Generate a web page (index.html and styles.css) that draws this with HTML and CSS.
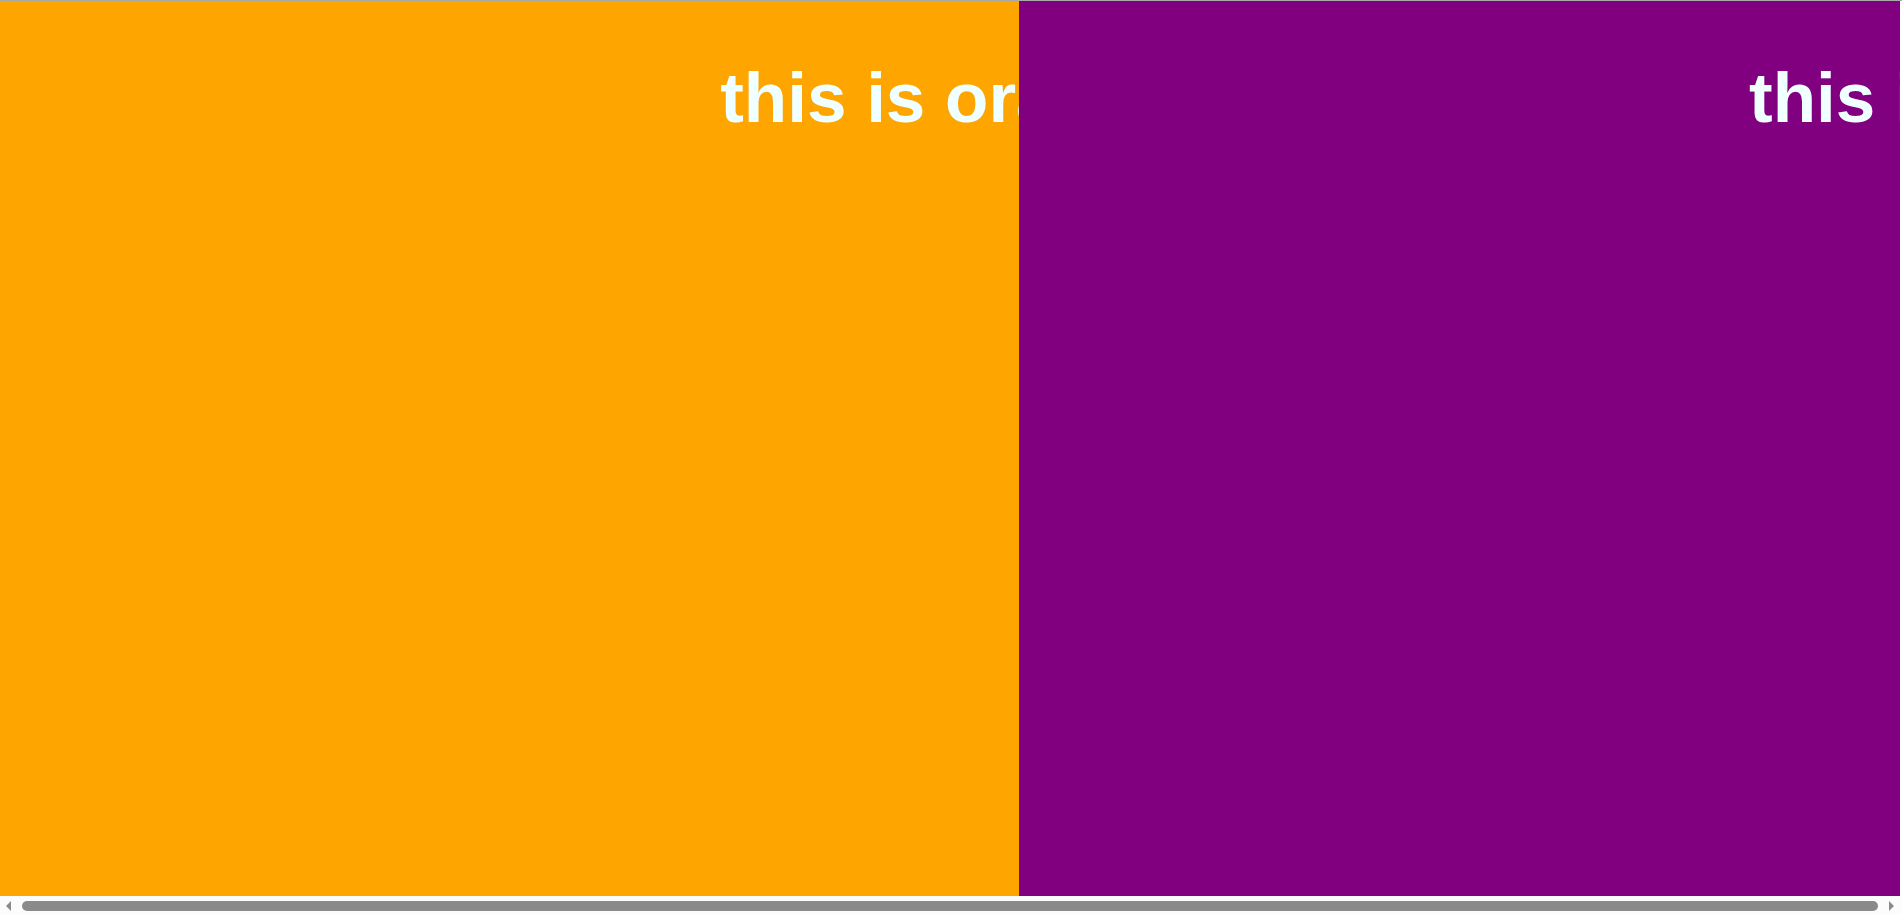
FILE: index.html
```html
<!DOCTYPE html>
<html>
<head>
<meta charset="utf-8">
<title>Panels</title>
<link rel="stylesheet" href="styles.css">
</head>
<body>
<div class="frame">
  <div class="track">
    <section class="panel panel-orange">
      <div class="panel-inner"><h1 class="title">this is orange</h1></div>
    </section>
    <section class="panel panel-purple">
      <div class="panel-inner"><h1 class="title">this is purple</h1></div>
    </section>
  </div>
  <div class="scrollbar">
    <span class="arrow arrow-left"></span>
    <span class="thumb"></span>
    <span class="arrow arrow-right"></span>
  </div>
</div>
</body>
</html>
```
FILE: styles.css
```css
html, body {
  margin: 0;
  padding: 0;
  background: #ffffff;
  overflow: hidden;
}
.frame {
  width: 1902px;
  height: 913px;
  border-top: 1px solid #a9a9a9;
  display: flex;
  flex-direction: column;
  background: #ffffff;
}
.track {
  display: flex;
  height: 895px;
  flex: none;
}
.panel {
  height: 895px;
  overflow: hidden;
  flex: none;
}
.panel-orange {
  width: 1019px;
  background: #ffa500;
}
.panel-purple {
  width: 881px;
  background: #800080;
}
.panel-inner {
  width: 1902px;
  padding-top: 56px;
  text-align: center;
}
.title {
  margin: 0;
  font-family: "Liberation Sans", Arial, sans-serif;
  font-weight: bold;
  font-size: 71px;
  color: #f0ffff;
  white-space: nowrap;
}
.scrollbar {
  flex: 1;
  display: flex;
  align-items: center;
  padding: 0 8px 0 6px;
  background: #fcfcfc;
}
.arrow {
  width: 0;
  height: 0;
  border-top: 5px solid transparent;
  border-bottom: 5px solid transparent;
  flex: none;
  margin-top: 1px;
}
.arrow-left {
  border-right: 5px solid #8a8a8a;
  margin-right: 11px;
}
.arrow-right {
  border-left: 5px solid #8a8a8a;
  margin-left: 11px;
}
.thumb {
  flex: 1;
  height: 10px;
  margin-top: 1px;
  background: #8a8a8a;
  border-radius: 5px;
}
```
